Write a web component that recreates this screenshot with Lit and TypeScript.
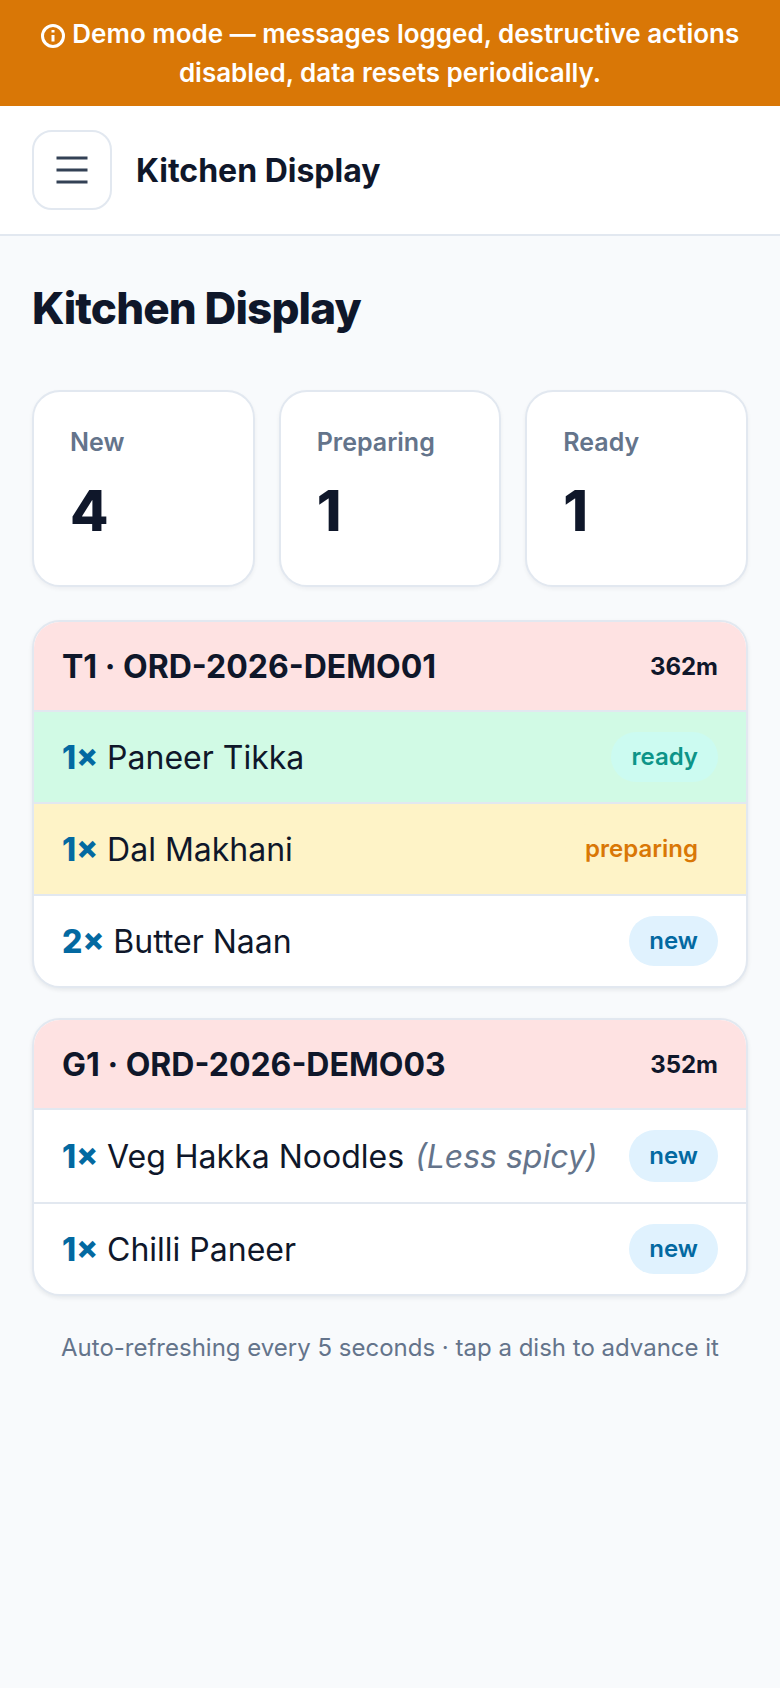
import { LitElement, html, css } from "lit";
import { customElement } from "lit/decorators.js";

type Item = { q: number; name: string; note?: string; status: "ready" | "preparing" | "new" };
type Order = { id: string; age: string; items: Item[] };

const orders: Order[] = [
  { id: "T1 · ORD-2026-DEMO01", age: "362m", items: [
    { q: 1, name: "Paneer Tikka", status: "ready" },
    { q: 1, name: "Dal Makhani", status: "preparing" },
    { q: 2, name: "Butter Naan", status: "new" },
  ]},
  { id: "G1 · ORD-2026-DEMO03", age: "352m", items: [
    { q: 1, name: "Veg Hakka Noodles", note: "(Less spicy)", status: "new" },
    { q: 1, name: "Chilli Paneer", status: "new" },
  ]},
];

@customElement("app-root")
export class AppRoot extends LitElement {
  static styles = css`
    :host { display: block; min-height: 1688px; background: #f8fafc; color: #0f172a; font-family: Inter, "Noto Sans", sans-serif; }
    .banner { background: #d97706; color: #fff; font-size: 26px; font-weight: 600; line-height: 39px; text-align: center; padding: 14px 32px; }
    .banner svg { width: 24px; height: 24px; vertical-align: -5px; margin-right: 1px; }
    .bar { display: flex; align-items: center; gap: 24px; background: #fff; padding: 24px 32px; border-bottom: 2px solid #e2e8f0; }
    .menu { width: 80px; height: 80px; box-sizing: border-box; border: 2px solid #e2e8f0; border-radius: 20px; background: #fff; display: flex; align-items: center; justify-content: center; }
    .menu svg { width: 32px; height: 32px; }
    .bar-title { font-size: 32px; font-weight: 700; }
    main { padding: 46px 32px 0; }
    h1 { margin: 0 0 55px; font-size: 44px; line-height: 53px; font-weight: 800; letter-spacing: -0.88px; }
    .stats { display: grid; grid-template-columns: repeat(3, 1fr); gap: 24px; margin-bottom: 33px; }
    .stat { background: #fff; border: 2px solid #e2e8f0; border-radius: 28px; padding: 36px; box-shadow: 0 2px 4px rgba(15,23,42,.05); }
    .stat-label { font-size: 25px; font-weight: 600; color: #64748b; line-height: 28px; }
    .stat-value { font-size: 56px; font-weight: 800; line-height: 76px; margin-top: 17px; }
    .order { background: #fff; border: 2px solid #e2e8f0; border-radius: 28px; overflow: hidden; margin-bottom: 30px; box-shadow: 0 2px 4px rgba(15,23,42,.08); }
    .head { display: flex; justify-content: space-between; align-items: center; background: #fee2e2; padding: 20px 28px; border-bottom: 2px solid #e2e8f0; height: 90px; box-sizing: border-box; }
    .order-id { font-size: 32px; font-weight: 700; }
    .age { font-size: 24px; font-weight: 700; }
    .row { display: flex; justify-content: space-between; align-items: center; gap: 16px; padding: 20px 28px; height: 92px; box-sizing: border-box; border-bottom: 2px solid #e2e8f0; font-size: 32px; }
    .row:last-child { border-bottom: 0; height: 90px; }
    .row.noted { height: 94px; }
    .row.ready { background: #d1fae5; }
    .row.preparing { background: #fef3c7; }
    .qty { font-weight: 800; color: #0369a1; }
    .note { color: #64748b; font-style: italic; margin-left: 2px; }
    .badge { font-size: 24px; font-weight: 600; padding: 8px 20px; border-radius: 999px; line-height: 34px; }
    .noted .badge { padding: 9px 20px; }
    .badge.new { background: #e0f2fe; color: #0369a1; }
    .badge.ready { background: #ccfbf1; color: #0d9488; }
    .badge.preparing { background: #fef3c7; color: #d97706; }
    .foot { text-align: center; color: #64748b; font-size: 24px; line-height: 36px; margin-top: 34px; }
  `;

  render() {
    return html`
      <div class="banner">
        <svg viewBox="0 0 24 24" fill="none" stroke="currentColor" stroke-width="3"><circle cx="12" cy="12" r="10.5"/><path d="M12 11v6.5M12 6v2.5"/></svg>
        Demo mode — messages logged, destructive actions disabled, data resets periodically.
      </div>
      <div class="bar">
        <div class="menu">
          <svg viewBox="0 0 32 32" fill="none" stroke="#334155" stroke-width="3"><path d="M.5 4h31M.5 16h31M.5 28h31"/></svg>
        </div>
        <div class="bar-title">Kitchen Display</div>
      </div>
      <main>
        <h1>Kitchen Display</h1>
        <div class="stats">
          ${[["New", 4], ["Preparing", 1], ["Ready", 1]].map(([l, v]) => html`
            <div class="stat"><div class="stat-label">${l}</div><div class="stat-value">${v}</div></div>`)}
        </div>
        ${orders.map((o) => html`
          <div class="order">
            <div class="head"><span class="order-id">${o.id}</span><span class="age">${o.age}</span></div>
            ${o.items.map((i) => html`
              <div class="row ${i.status} ${i.note ? "noted" : ""}">
                <span><span class="qty">${i.q}×</span> ${i.name}${i.note ? html` <span class="note">${i.note}</span>` : ""}</span>
                <span class="badge ${i.status}">${i.status}</span>
              </div>`)}
          </div>`)}
        <div class="foot">Auto-refreshing every 5 seconds · tap a dish to advance it</div>
      </main>
    `;
  }
}
